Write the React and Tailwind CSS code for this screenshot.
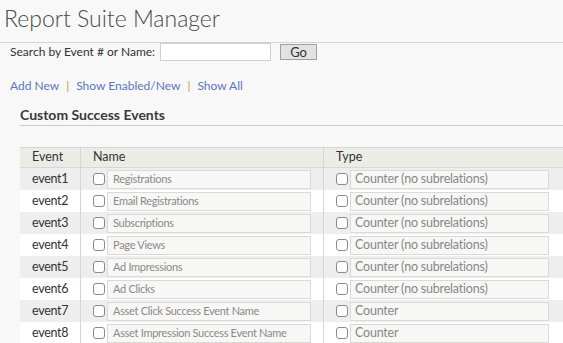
import React from 'react';

const rows = [
  { id: 'event1', name: 'Registrations', type: 'Counter (no subrelations)' },
  { id: 'event2', name: 'Email Registrations', type: 'Counter (no subrelations)' },
  { id: 'event3', name: 'Subscriptions', type: 'Counter (no subrelations)' },
  { id: 'event4', name: 'Page Views', type: 'Counter (no subrelations)' },
  { id: 'event5', name: 'Ad Impressions', type: 'Counter (no subrelations)' },
  { id: 'event6', name: 'Ad Clicks', type: 'Counter (no subrelations)' },
  { id: 'event7', name: 'Asset Click Success Event Name', type: 'Counter' },
  { id: 'event8', name: 'Asset Impression Success Event Name', type: 'Counter' },
];

const Box = () => (
  <span className="w-[12px] h-[12px] shrink-0 rounded-[3px] border border-[#8a8a8a] bg-white" />
);

const App = () => {
  return (
    <div className="w-[563px] h-[343px] overflow-hidden bg-[#f8f8f8] text-[#333] font-['Lato','Open_Sans',sans-serif]">
      <h1 className="h-[42px] pl-[4px] pt-[3px] text-[23px] font-light leading-[30px] text-[#4a4a4a]">
        Report Suite Manager
      </h1>
      <div className="border-t border-[#d4d4d4] flex items-start h-[28px]">
        <span className="ml-[10px] mt-[1px] text-[12px] leading-[16px] text-[#333]">Search by Event # or Name:</span>
        <span className="ml-[5px] w-[111px] h-[18px] bg-white border border-[#cfcfcf]" />
        <span className="ml-[9px] mt-[1px] w-[37px] h-[16px] bg-[#e2e2e2] border border-[#a0a0a0] flex items-center justify-center text-[13px] leading-none text-[#333]">
          Go
        </span>
      </div>
      <div className="h-[29px] pl-[10px] pt-[3px] flex items-center gap-[7px] text-[12px] text-[#5b76c4] leading-[16px]">
        <span>Add New</span>
        <span className="text-[#c9944a]">|</span>
        <span>Show Enabled/New</span>
        <span className="text-[#c9944a]">|</span>
        <span>Show All</span>
      </div>
      <div className="ml-[20px] h-[27px] pt-[7px] border-b border-[#cccccc] text-[14px] font-bold leading-[18px] text-[#3a3a3a]">
        Custom Success Events
      </div>
      <div className="ml-[20px] mt-[21px] w-[600px] text-[12.5px] leading-[16px]">
        <div className="flex h-[21px] bg-[#ecece6] border-y border-[#d6d6d6]">
          <div className="w-[61px] pl-[12px] pt-[1px] border-r border-[#d6d6d6]">Event</div>
          <div className="w-[243px] pl-[12px] pt-[1px] border-r border-[#d6d6d6]">Name</div>
          <div className="flex-1 pl-[12px] pt-[1px]">Type</div>
        </div>
        {rows.map((r, i) => (
          <div key={r.id} className={`flex h-[22px] ${i % 2 === 0 ? 'bg-[#eeeeee]' : 'bg-white'}`}>
            <div className="w-[61px] pl-[12px] flex items-center border-r border-[#d6d6d6] text-[#333] tracking-[-0.3px]">{r.id}</div>
            <div className="w-[243px] pl-[12px] flex items-center gap-[2px] border-r border-[#d6d6d6]">
              <Box />
              <span className="w-[204px] h-[19px] pl-[5px] flex items-center bg-[#f7f7f5] border border-[#dadada] text-[11px] tracking-[-0.3px] text-[#8a8a8a] whitespace-nowrap overflow-hidden">
                {r.name}
              </span>
            </div>
            <div className="flex-1 pl-[12px] flex items-center gap-[2px]">
              <Box />
              <span className="w-[199px] h-[19px] pl-[4px] flex items-center bg-[#f7f7f5] border border-[#dadada] text-[12.5px] tracking-[-0.2px] text-[#888] whitespace-nowrap">
                {r.type}
              </span>
            </div>
          </div>
        ))}
      </div>
    </div>
  );
};

export default App;
